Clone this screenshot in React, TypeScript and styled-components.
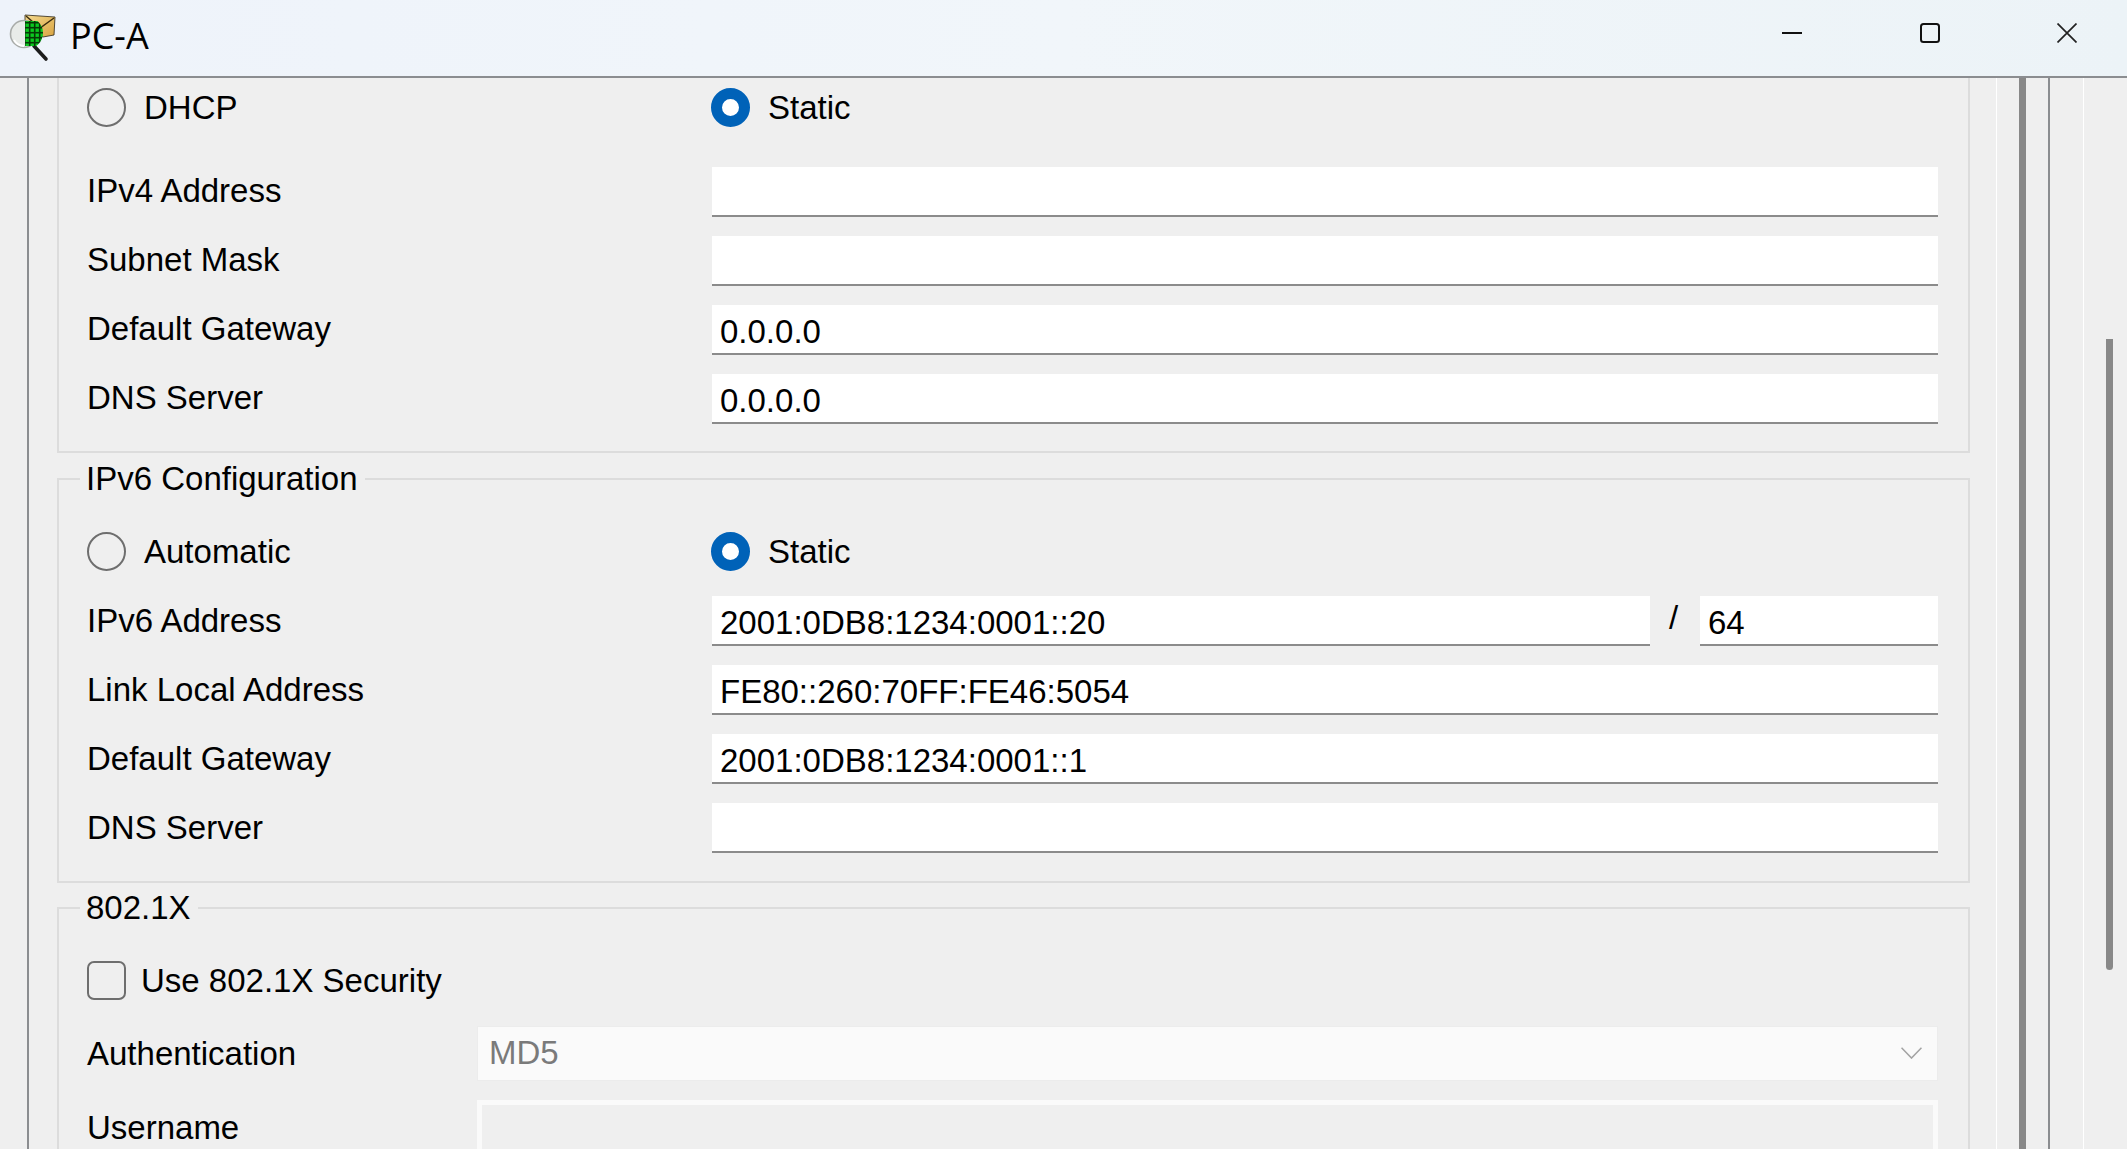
import styled, { createGlobalStyle } from "styled-components";

const GlobalStyle = createGlobalStyle`
  html, body {
    margin: 0;
    padding: 0;
    background: #efefef;
    overflow: hidden;
  }
`;

const Window = styled.div`
  width: 2127px;
  height: 1149px;
  display: flex;
  flex-direction: column;
  overflow: hidden;
  color: #000;
  font-family: "Liberation Sans", Arial, sans-serif;
  font-size: 33px;
`;

const TitleBar = styled.div`
  flex: none;
  height: 78px;
  box-sizing: border-box;
  display: flex;
  align-items: center;
  padding-left: 8px;
  background: linear-gradient(90deg, #eef3fa, #f1f6fa 50%, #ecf3f7);
  border-bottom: 2px solid #8b8d90;
`;

const Title = styled.div`
  flex: 1;
  margin-left: 12px;
  margin-top: -6px;
  font-family: "Open Sans", sans-serif;
  font-size: 36px;
`;

const WinButtons = styled.div`
  display: flex;
  align-items: center;
  padding-right: 50px;
  gap: 117.5px;
  margin-top: -10px;
`;

const Body = styled.div`
  flex: 1;
  min-height: 0;
  display: flex;
  overflow: hidden;
  background: #efefef;
`;

const Panel = styled.div`
  width: 1969px;
  margin-left: 27px;
  box-sizing: border-box;
  border-left: 2px solid #8b8d90;
  padding-left: 28px;
  flex: none;
`;

const Label = styled.div`
  line-height: 48px;
  white-space: nowrap;
`;

const Group = styled.fieldset<{ $cut?: boolean }>`
  margin: 0 0 ${(p) => (p.$cut ? "7px" : "6px")};
  padding: ${(p) => (p.$cut ? "10px 30px 27px 28px" : "0 30px 28px 28px")};
  min-width: 0;
  width: 1913px;
  box-sizing: border-box;
  border: 2px solid #dcdcdc;
  border-top: ${(p) => (p.$cut ? "none" : "2px solid #dcdcdc")};
  ${Label} {
    margin-top: ${(p) => (p.$cut ? "-2px" : "0")};
  }
`;

const Legend = styled.legend`
  margin-left: -7px;
  padding: 0 7px 0 6px;
  line-height: 38px;
  height: 38px;
`;

const ChoiceRow = styled.div<{ $after: number; $top: number }>`
  display: grid;
  grid-template-columns: 624px 1fr;
  margin-top: ${(p) => p.$top}px;
  margin-bottom: ${(p) => p.$after}px;
`;

const Choice = styled.div`
  display: flex;
  align-items: center;
  gap: 18px;
  height: 39px;
`;

const Radio = styled.span<{ $on?: boolean }>`
  width: 39px;
  height: 39px;
  box-sizing: border-box;
  border-radius: 50%;
  flex: none;
  border: ${(p) => (p.$on ? "11.5px solid #0062b8" : "2px solid #6e6e6e")};
  background: ${(p) => (p.$on ? "#fff" : "transparent")};
`;

const Row = styled.div`
  display: grid;
  grid-template-columns: 625px 1fr;
  align-items: center;
  height: 50px;
  margin-bottom: 19px;
  &:last-child {
    margin-bottom: 0;
  }
`;

const Field = styled.div<{ $width?: number }>`
  height: 50px;
  box-sizing: border-box;
  flex: ${(p) => (p.$width ? "none" : "1")};
  width: ${(p) => (p.$width ? `${p.$width}px` : "auto")};
  background: #fff;
  border-bottom: 2px solid #8b8b8b;
  padding: 4px 8px 0;
  line-height: 46px;
  white-space: nowrap;
`;

const FieldLine = styled.div`
  display: flex;
  align-items: center;
`;

const Slash = styled.div`
  width: 50px;
  box-sizing: border-box;
  padding-right: 3px;
  text-align: center;
  margin-top: -6px;
`;

const CheckRow = styled.div`
  display: flex;
  align-items: center;
  gap: 15px;
  height: 39px;
  margin-top: 34px;
  margin-bottom: 26px;
`;

const Check = styled.span`
  width: 39px;
  height: 39px;
  box-sizing: border-box;
  border: 2px solid #6e6e6e;
  border-radius: 7px;
`;

const SecurityRow = styled.div`
  display: grid;
  grid-template-columns: 390px 1fr;
  align-items: center;
  height: 55px;
  margin-bottom: 19px;
`;

const Combo = styled.div`
  height: 55px;
  box-sizing: border-box;
  display: flex;
  align-items: center;
  justify-content: space-between;
  padding: 0 15px 2px 11px;
  background: #fafafa;
  border: 1px solid #ececec;
  color: #7a7a7a;
`;

const DisabledField = styled.div`
  height: 55px;
  box-sizing: border-box;
  border: 5px solid #fafafa;
  background: #efefef;
`;

const Rail = styled.div`
  flex: none;
  width: 52px;
  box-sizing: border-box;
  border-left: 1px solid #fff;
  padding-left: 22px;
`;

const RailBar = styled.div`
  width: 7px;
  height: 100%;
  background: #888;
`;

const Track = styled.div`
  flex: none;
  width: 35px;
  box-sizing: border-box;
  border-left: 2px solid #8b8d90;
`;

const ScrollArea = styled.div`
  flex: none;
  box-sizing: border-box;
  width: 44px;
  border-left: 1px solid #fff;
  padding: 261px 0 0 22px;
`;

const Thumb = styled.div`
  width: 7px;
  height: 631px;
  background: #888;
  border-radius: 0 0 4px 4px;
`;

const AppIcon = () => (
  <svg width="50" height="50" viewBox="8 10 50 50">
    <defs>
      <pattern id="cells" width="5" height="5" patternUnits="userSpaceOnUse">
        <rect width="5" height="5" fill="#063806" />
        <rect x="0.5" y="0.5" width="3.4" height="3.4" fill="#0bc81f" />
      </pattern>
      <clipPath id="lens">
        <circle cx="27" cy="30" r="16" />
      </clipPath>
      <linearGradient id="envelope" x1="0" y1="0" x2="1" y2="1">
        <stop offset="0" stopColor="#f3d98e" />
        <stop offset="1" stopColor="#d9a441" />
      </linearGradient>
    </defs>
    <path d="M25 12 L55 14 L54 32 L43 34 L25 20Z" fill="url(#envelope)" stroke="#2b2416" strokeWidth="0.8" />
    <path d="M26 13 L40 25 L54 15" fill="none" stroke="#3a2c10" strokeWidth="1.4" />
    <path d="M34 43 L46 56" stroke="#1c1c1c" strokeWidth="3.6" strokeLinecap="round" />
    <circle cx="24" cy="31" r="13.5" fill="#e8ebe8" stroke="#a9aca9" strokeWidth="1.6" />
    <rect x="25" y="18" width="18" height="25" fill="url(#cells)" clipPath="url(#lens)" />
    <path d="M14 37 A12 12 0 0 0 24 43" fill="none" stroke="#fff" strokeWidth="2" />
  </svg>
);

const IconMin = () => (
  <svg width="20" height="20" viewBox="0 0 20 20">
    <path d="M0 10 H20" stroke="#111" strokeWidth="2" />
  </svg>
);

const IconMax = () => (
  <svg width="20" height="20" viewBox="0 0 20 20">
    <rect x="1" y="1" width="18" height="18" rx="2.5" fill="none" stroke="#111" strokeWidth="2" />
  </svg>
);

const IconClose = () => (
  <svg width="20" height="20" viewBox="0 0 20 20">
    <path d="M0.5 0.5 L19.5 19.5 M19.5 0.5 L0.5 19.5" stroke="#222" strokeWidth="1.7" />
  </svg>
);

const Chevron = () => (
  <svg width="21" height="12" viewBox="0 0 21 12">
    <path d="M0.5 0.7 L10.5 11 L20.5 0.7" fill="none" stroke="#a3a3a3" strokeWidth="1.6" />
  </svg>
);

const App = () => {
  return (
    <Window>
      <GlobalStyle />
      <TitleBar>
        <AppIcon />
        <Title>PC-A</Title>
        <WinButtons>
          <IconMin />
          <IconMax />
          <IconClose />
        </WinButtons>
      </TitleBar>
      <Body>
        <Panel>
          <Group $cut>
            <ChoiceRow $top={0} $after={40}>
              <Choice>
                <Radio />
                DHCP
              </Choice>
              <Choice>
                <Radio $on />
                Static
              </Choice>
            </ChoiceRow>
            <Row>
              <Label>IPv4 Address</Label>
              <Field />
            </Row>
            <Row>
              <Label>Subnet Mask</Label>
              <Field />
            </Row>
            <Row>
              <Label>Default Gateway</Label>
              <Field>0.0.0.0</Field>
            </Row>
            <Row>
              <Label>DNS Server</Label>
              <Field>0.0.0.0</Field>
            </Row>
          </Group>
          <Group>
            <Legend>IPv6 Configuration</Legend>
            <ChoiceRow $top={34} $after={25}>
              <Choice>
                <Radio />
                Automatic
              </Choice>
              <Choice>
                <Radio $on />
                Static
              </Choice>
            </ChoiceRow>
            <Row>
              <Label>IPv6 Address</Label>
              <FieldLine>
                <Field>2001:0DB8:1234:0001::20</Field>
                <Slash>/</Slash>
                <Field $width={238}>64</Field>
              </FieldLine>
            </Row>
            <Row>
              <Label>Link Local Address</Label>
              <Field>FE80::260:70FF:FE46:5054</Field>
            </Row>
            <Row>
              <Label>Default Gateway</Label>
              <Field>2001:0DB8:1234:0001::1</Field>
            </Row>
            <Row>
              <Label>DNS Server</Label>
              <Field />
            </Row>
          </Group>
          <Group>
            <Legend>802.1X</Legend>
            <CheckRow>
              <Check />
              Use 802.1X Security
            </CheckRow>
            <SecurityRow>
              <Label>Authentication</Label>
              <Combo>
                MD5
                <Chevron />
              </Combo>
            </SecurityRow>
            <SecurityRow>
              <Label>Username</Label>
              <DisabledField />
            </SecurityRow>
          </Group>
        </Panel>
        <Rail>
          <RailBar />
        </Rail>
        <Track />
        <ScrollArea>
          <Thumb />
        </ScrollArea>
      </Body>
    </Window>
  );
};

export default App;
